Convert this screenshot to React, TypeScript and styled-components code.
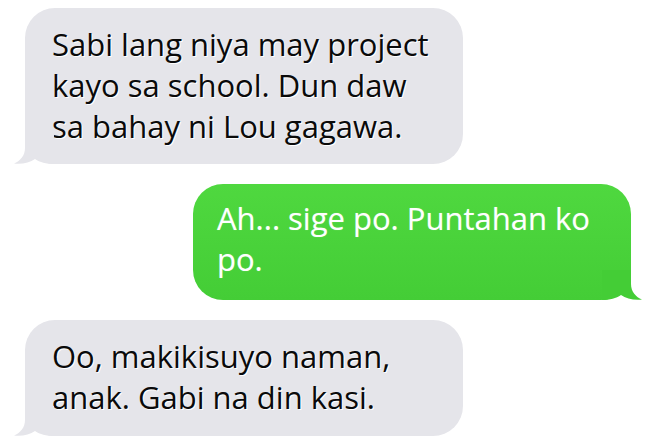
import React from 'react';
import styled, { createGlobalStyle } from 'styled-components';

const GlobalStyle = createGlobalStyle`
  html, body {
    margin: 0;
    padding: 0;
    background: #ffffff;
  }
  body {
    font-family: 'Open Sans', 'Liberation Sans', sans-serif;
  }
`;

const Thread = styled.div`
  width: 660px;
  height: 445px;
  box-sizing: border-box;
  padding: 8px 0 0 25px;
  display: flex;
  flex-direction: column;
  gap: 20px;
  overflow: hidden;
`;

const Row = styled.div<{ $mine: boolean }>`
  display: flex;
  justify-content: ${p => (p.$mine ? 'flex-end' : 'flex-start')};
  padding-right: ${p => (p.$mine ? '29px' : '0')};
`;

const Bubble = styled.div<{ $mine: boolean }>`
  position: relative;
  width: 438px;
  min-height: 116px;
  box-sizing: border-box;
  padding: ${p => (p.$mine ? '14px 20px 20px 24px' : '16px 20px 17px 27px')};
  border-radius: 30px;
  background: ${p => (p.$mine ? 'linear-gradient(#4fd83f, #44cd36)' : '#e5e5ea')};
  color: ${p => (p.$mine ? '#ffffff' : '#0a0a0a')};
  font-size: 31px;
  line-height: 41px;
  white-space: nowrap;
  text-shadow: ${p => (p.$mine ? '0 0 1px rgba(255,255,255,0.4)' : '1px 1px 0 #ffffff')};
`;

const Tail = styled.svg<{ $mine: boolean }>`
  position: absolute;
  bottom: 0;
  width: 40px;
  height: 30px;
  ${p => (p.$mine ? 'right: -11px; transform: scaleX(-1);' : 'left: -11px;')}
`;

type Msg = { text: React.ReactNode; mine: boolean };

const messages: Msg[] = [
  {
    mine: false,
    text: (
      <>
        Sabi lang niya may project
        <br />
        kayo sa school. Dun daw
        <br />
        sa bahay ni Lou gagawa.
      </>
    ),
  },
  {
    mine: true,
    text: (
      <>
        Ah... sige po. Puntahan ko
        <br />
        po.
      </>
    ),
  },
  {
    mine: false,
    text: (
      <>
        Oo, makikisuyo naman,
        <br />
        anak. Gabi na din kasi.
      </>
    ),
  },
];

// buntot ng bubble, iisang hugis, binabaligtad lang para sa kanan
const BubbleTail: React.FC<{ mine: boolean }> = ({ mine }) => (
  <Tail $mine={mine} viewBox="0 0 40 30" aria-hidden>
    <path
      d="M11 0 L11 14 C11 22 6 27 0 29.5 C8 30.5 16 28.5 21 25 C26 28.5 32 30 40 30 L40 0 Z"
      fill={mine ? '#44cd36' : '#e5e5ea'}
    />
  </Tail>
);

export default function App() {
  return (
    <>
      <GlobalStyle />
      <Thread>
        {messages.map((m, i) => (
          <Row key={i} $mine={m.mine}>
            <Bubble $mine={m.mine}>
              {m.text}
              <BubbleTail mine={m.mine} />
            </Bubble>
          </Row>
        ))}
      </Thread>
    </>
  );
}
